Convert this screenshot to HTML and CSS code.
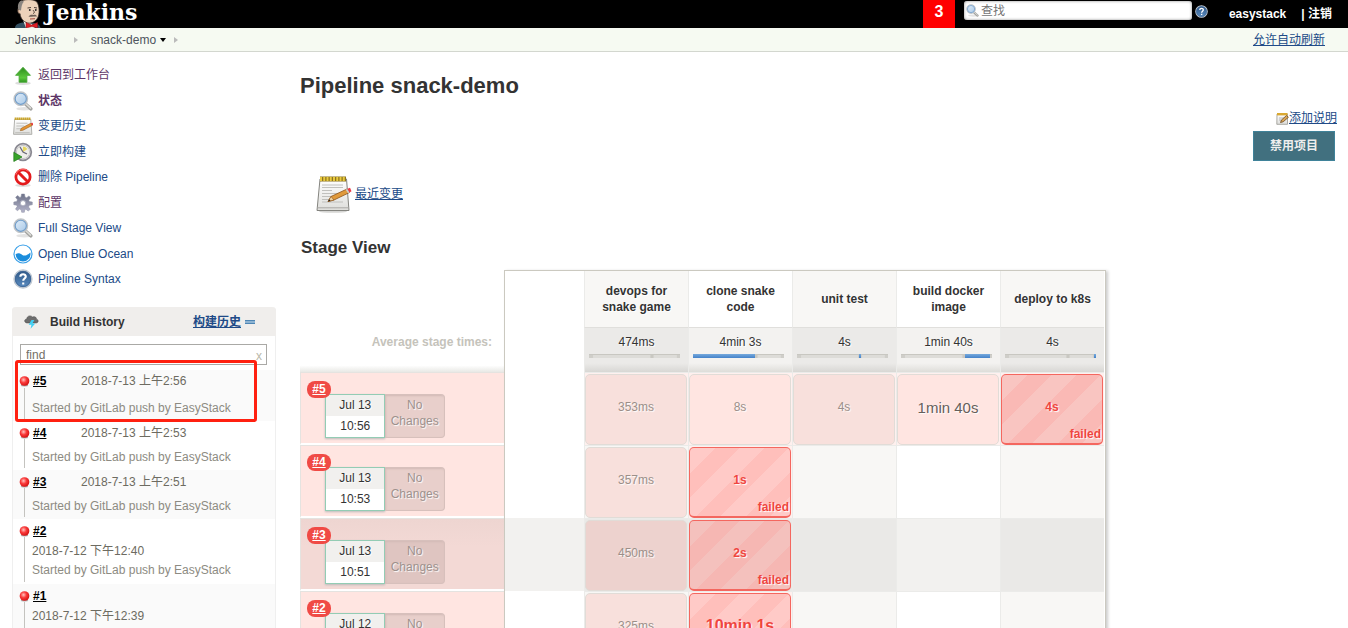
FILE: index.html
```html
<!DOCTYPE html>
<html lang="zh-CN">
<head>
<meta charset="utf-8">
<title>snack-demo [Jenkins]</title>
<link rel="stylesheet" href="styles.css">
</head>
<body>
<svg class="sprite" aria-hidden="true">
  <defs>
    <linearGradient id="g-green" x1="0" y1="0" x2="0" y2="1"><stop offset="0" stop-color="#2c8a1c"/><stop offset=".7" stop-color="#5cc83c"/><stop offset="1" stop-color="#2f951f"/></linearGradient>
    <linearGradient id="g-glass" x1="0" y1="0" x2="1" y2="1"><stop offset="0" stop-color="#e4effa"/><stop offset="1" stop-color="#a4c6e6"/></linearGradient>
    <linearGradient id="g-help" x1="0" y1="0" x2="0" y2="1"><stop offset="0" stop-color="#2e5583"/><stop offset="1" stop-color="#5c8fc4"/></linearGradient>
    <linearGradient id="g-gear" x1="0" y1="0" x2="0" y2="1"><stop offset="0" stop-color="#6c7187"/><stop offset="1" stop-color="#b4b4cb"/></linearGradient>
    <linearGradient id="g-paper" x1="0" y1="0" x2="0" y2="1"><stop offset="0" stop-color="#fff"/><stop offset="1" stop-color="#dededb"/></linearGradient>
    <radialGradient id="g-ball" cx=".4" cy=".38" r=".6"><stop offset="0" stop-color="#ffc4c0"/><stop offset=".5" stop-color="#fa3b3b"/><stop offset="1" stop-color="#d81516"/></radialGradient>
  </defs>
  <symbol id="i-up" viewBox="1 1 18 18"><ellipse cx="10" cy="17.400" rx="7" ry="1.500" fill="#ddd"/><path d="M10 3 16.700 10.300H13.500V16.500H6.500V10.300H3.300Z" fill="url(#g-green)" stroke="#4aa93a" stroke-width=".8"/></symbol>
  <symbol id="i-search" viewBox="1 1 18 18"><ellipse cx="11" cy="17" rx="7" ry="1.500" fill="#e3e3e3"/><path d="M12 12.500 17 17" stroke="#a3a3a0" stroke-width="3.200" stroke-linecap="round"/><path d="M12.500 12.500 16.800 16.400" stroke="#dcdcd8" stroke-width="1.300" stroke-linecap="round"/><circle cx="8" cy="8" r="5.900" fill="url(#g-glass)" stroke="#c0c4c8" stroke-width="1.600"/><circle cx="8" cy="8" r="5" fill="none" stroke="#6f9dcb" stroke-width="1"/></symbol>
  <symbol id="i-note" viewBox="1 1 18 18"><path d="M2.500 4H17L18 17.500H1.500Z" fill="url(#g-paper)" stroke="#a8a8a4" stroke-width=".8"/><path d="M2.500 3.500H17" stroke="#c9a52d" stroke-width="2.400" stroke-dasharray="1.500 .3"/><path d="M4 7.500H14M4 10H11M4 12.500H9M3 16H16" stroke="#b9b9b6" stroke-width=".8"/><path d="M7.500 14.200 8.500 12 17 7.500 18.200 9.500 10 13.800Z" fill="#e69430" stroke="#93591c" stroke-width=".5"/><path d="M17 7.500 18.600 7 19.300 8.800 18.200 9.500Z" fill="#e8383b"/></symbol>
  <symbol id="i-edit" viewBox="0 0 13 13"><path d="M1 2H11.500V12.300H.8Z" fill="url(#g-paper)" stroke="#98978f" stroke-width=".8"/><path d="M1 2.200H11.500" stroke="#d9a832" stroke-width="2.400"/><path d="M3 6H8M3 8H6" stroke="#aaa" stroke-width=".8"/><path d="M4.500 10.500 5.500 8 10.500 3.500 12.400 5.300 7.200 9.800Z" fill="#d9a556" stroke="#6b4a22" stroke-width=".8"/></symbol>
  <symbol id="i-notepad" viewBox="0 0 36 38"><ellipse cx="17" cy="36.500" rx="14" ry="1.300" fill="#d6d6d4"/><path d="M4 4H30.500L33 35.500H1Z" fill="url(#g-paper)" stroke="#84847f"/><path d="M1.500 32.800H32.500" stroke="#aaa9a5"/><path d="M4 4H30" stroke="#8d7420" stroke-width="5"/><path d="M4 4H30" stroke="#e9c93d" stroke-width="4.200" stroke-dasharray="2 1.250"/><path d="M6 10H27M6 12.500H27M6 15.500H16M6 18.500H26M6 21.500H22M6 24.500H14M6 27H27" stroke="#bbbbb8" stroke-width=".9"/><path d="M12 26.500 15 21.500 31 14 33.500 17.500 18 25Z" fill="#e09a3c" stroke="#8b531a" stroke-width=".8"/><path d="M12 26.500 15 21.500 18 25Z" fill="#efcf9b" stroke="#8b531a" stroke-width=".6"/><path d="M12 26.500 13.300 24.300 14.500 25.800Z" fill="#222"/><path d="M31 14 34 12.700 35.500 16.200 33.500 17.500Z" fill="#eb3944"/><path d="M29.600 14.600 31.300 13.900 33.500 17.500 32 18.200Z" fill="#c9cdcc"/></symbol>
  <symbol id="i-clock" viewBox="0 0 20 20"><circle cx="10" cy="10" r="8.300" fill="#eeeee9" stroke="#8a8992" stroke-width="1.800"/><circle cx="10" cy="10" r="6.600" fill="none" stroke="#c2c1c5" stroke-width=".9"/><path d="M10 10V4.500A5.500 5.500 0 0 1 14.500 7Z" fill="#e6d65e"/><path d="M7 5 10 10 14 12" fill="none" stroke="#6a6978" stroke-width="1.300"/><path d="M.8 10.300 9 15 .8 19.500Z" fill="#38a329" stroke="#207a18" stroke-width=".7"/></symbol>
  <symbol id="i-no" viewBox="1 1 18 18"><ellipse cx="10" cy="17.500" rx="7" ry="1.500" fill="#ddd"/><circle cx="10" cy="10" r="6.400" fill="#fff" stroke="#e41a1c" stroke-width="2.500"/><path d="M5.500 5.500 14.500 14.500" stroke="#e41a1c" stroke-width="2.700"/><path d="M3.500 8A6.800 6.800 0 0 1 15 5" fill="none" stroke="#f77" stroke-width=".8"/></symbol>
  <symbol id="i-gear" viewBox="0 0 20 20"><path fill="url(#g-gear)" stroke="#8b8ea3" stroke-width=".5" d="M8.500 1H11.500L12 4 13.600 4.700 16 2.900 17.500 5 15.800 7.200 16.300 8.500 19.300 9V11.700L16.300 12.300 15.500 14 17.300 16.300 15.200 18 12.900 16.200 11.800 16.700 11.300 19.300H8.700L8.200 16.700 6.500 16 4.300 17.800 2.500 16 4.200 13.500 3.700 12.200.8 11.700V9L3.700 8.400 4.400 6.800 2.600 4.300 4.600 2.600 6.900 4.400 8 4Z"/><circle cx="10" cy="10.200" r="2.700" fill="#fff" stroke="#a9abbd"/></symbol>
  <symbol id="i-ocean" viewBox="0 0 20 20"><circle cx="10" cy="10" r="9" fill="#fff" stroke="#3aa0e8" stroke-width="1.200"/><path d="M2.600 10.300C5 8.600 7 9.300 9 10.700S13.500 12.100 17.300 8.500A7.500 7.500 0 0 1 10 17.500 7.400 7.400 0 0 1 2.600 10.300Z" fill="#1b8ddc"/></symbol>
  <symbol id="i-help" viewBox="1 1 18 18"><circle cx="10" cy="10" r="8" fill="url(#g-help)" stroke="#bfc8d2" stroke-width="1.400"/><circle cx="10" cy="10" r="6.900" fill="none" stroke="#3f6796" stroke-width=".8"/><path d="M7.600 8C7.600 4.900 12.600 5 12.500 7.900 12.400 9.600 10.200 9.600 10.200 11.600M10.200 13.200V15" fill="none" stroke="#fff" stroke-width="1.900"/></symbol>
  <symbol id="i-ball" viewBox="0 0 12 12"><ellipse cx="6" cy="11" rx="4" ry="1" fill="#aaa"/><circle cx="6" cy="6" r="5.300" fill="url(#g-ball)"/></symbol>
</svg>

<header class="topbar">
  <a class="logo" href="#">
    <svg class="butler" viewBox="0 0 28 28" aria-hidden="true">
      <path d="M0 28C0 25 3 23 8 22.500L20 23C24 24 25 26 25.500 28Z" fill="#335061"/>
      <path d="M8 20 17 24 20 28H11Z" fill="#f4f4ef"/>
      <path d="M5 2C8-1 18-1.500 22 2 24.500 6 24.500 12 23.500 16 22 21 17 24 12.500 23 8 21.500 5.500 18 5 14 2.500 13 2 9 3.500 8Z" fill="#ecd2ba" stroke="#2b2320" stroke-width=".8"/>
      <path d="M6 .5C2.500 3 2.500 7 3.500 10L6 10.500C6.500 7 6.500 4 9 1.500Z" fill="#8a8580"/>
      <path d="M3.500 9C2 11 3 14 5.500 14" fill="#dfb89b" stroke="#2b2320" stroke-width=".7"/>
      <path d="M12.500 8 16 7.500M19 7.500 22 8M18 10C19.500 12 20 13 18 13.500" fill="none" stroke="#3d302a" stroke-width=".9"/>
      <circle cx="14.800" cy="10" r=".9" fill="#222"/><circle cx="20.800" cy="10" r=".9" fill="#222"/>
      <path d="M13.500 16.500C15 14.300 17 14.500 18.500 15 20 14.500 21.500 15 22 16.500 19 16.500 16 17 13.500 16.500Z" fill="#6c5f57"/>
      <path d="M15 19 20 18.700" stroke="#a44b3e" stroke-width="1"/>
      <path d="M11 22.500 16.500 25 22.500 22.500V28L17 26.500 11 28Z" fill="#e01f26" stroke="#8d1015" stroke-width=".5"/>
    </svg>
    <span>Jenkins</span>
  </a>
  <a class="alerts" href="#">3</a>
  <form class="search">
    <svg class="search-icon" aria-hidden="true"><use href="#i-search"/></svg>
    <input type="text" placeholder="查找" aria-label="查找">
  </form>
  <a class="help" href="#" aria-label="帮助"><svg aria-hidden="true"><use href="#i-help"/></svg></a>
  <nav class="login"><a href="#">easystack</a><span class="logout">| <a href="#">注销</a></span></nav>
</header>

<nav class="crumbs">
  <a href="#">Jenkins</a><i class="sep"></i><a href="#">snack-demo</a><i class="caret"></i><i class="sep near"></i>
  <a class="refresh" href="#">允许自动刷新</a>
</nav>

<div class="page">
  <aside class="side">
    <ul class="tasks">
      <li><svg><use href="#i-up"/></svg><a class="visited" href="#">返回到工作台</a></li>
      <li><svg><use href="#i-search"/></svg><a class="visited current" href="#">状态</a></li>
      <li><svg><use href="#i-note"/></svg><a href="#">变更历史</a></li>
      <li><svg><use href="#i-clock"/></svg><a href="#">立即构建</a></li>
      <li><svg><use href="#i-no"/></svg><a href="#">删除 Pipeline</a></li>
      <li><svg><use href="#i-gear"/></svg><a class="visited" href="#">配置</a></li>
      <li><svg><use href="#i-search"/></svg><a href="#">Full Stage View</a></li>
      <li><svg><use href="#i-ocean"/></svg><a href="#">Open Blue Ocean</a></li>
      <li><svg><use href="#i-help"/></svg><a href="#">Pipeline Syntax</a></li>
    </ul>

    <section class="history">
      <div class="history-head">
        <svg class="storm" viewBox="0 0 16 16" aria-hidden="true"><path d="M3 9.500C0 9 0 5.500 3 5.300 3 2 7 1 9 3.200 12 2 13.500 4 13.200 5.500 16 6 15.500 9.500 13 9.500Z" fill="#6d6d6d" stroke="#4c4c4c" stroke-width=".6"/><path d="M8 6.500 5 11.500H8L7 15.800 12 10H9L11 6.500Z" fill="#3fd0f5"/></svg>
        <h2>Build History</h2>
        <a href="#">构建历史</a><i class="collapse"></i>
      </div>
      <div class="find"><input type="text" value="find" aria-label="find"><button type="button" aria-label="clear">x</button></div>
      <div class="builds">
        <div class="build first"><svg class="ball"><use href="#i-ball"/></svg><a href="#">#5</a><time>2018-7-13 上午2:56</time><p>Started by GitLab push by EasyStack</p></div>
        <div class="build"><svg class="ball"><use href="#i-ball"/></svg><a href="#">#4</a><time>2018-7-13 上午2:53</time><p>Started by GitLab push by EasyStack</p></div>
        <div class="build"><svg class="ball"><use href="#i-ball"/></svg><a href="#">#3</a><time>2018-7-13 上午2:51</time><p>Started by GitLab push by EasyStack</p></div>
        <div class="build stacked"><svg class="ball"><use href="#i-ball"/></svg><a href="#">#2</a><time>2018-7-12 下午12:40</time><p>Started by GitLab push by EasyStack</p></div>
        <div class="build stacked"><svg class="ball"><use href="#i-ball"/></svg><a href="#">#1</a><time>2018-7-12 下午12:39</time></div>
        <div class="marker"></div>
      </div>
    </section>
  </aside>

  <main class="main">
    <h1>Pipeline snack-demo</h1>
    <div class="actions">
      <a href="#"><svg aria-hidden="true"><use href="#i-edit"/></svg><span>添加说明</span></a>
      <button type="button">禁用项目</button>
    </div>
    <div class="recent"><svg aria-hidden="true"><use href="#i-notepad"/></svg><a href="#">最近变更</a></div>
    <h2>Stage View</h2>

    <div class="stage-view">
      <table>
        <colgroup><col class="c-job"><col class="c-gap"><col span="5" class="c-stage"></colgroup>
        <thead>
          <tr class="names"><td></td><td></td><th>devops for snake game</th><th>clone snake code</th><th>unit test</th><th>build docker image</th><th>deploy to k8s</th></tr>
          <tr class="averages"><th>Average stage times:</th><td></td>
            <td>474ms<div class="bar"></div></td>
            <td>4min 3s<div class="bar"><i style="left:0;width:68%"></i></div></td>
            <td>4s<div class="bar"><i style="left:68%;width:2%"></i></div></td>
            <td>1min 40s<div class="bar"><i style="left:70%;width:28%"></i></div></td>
            <td>4s<div class="bar"><i style="left:98%;width:2%"></i></div></td></tr>
        </thead>
        <tbody>
          <tr class="partial">
            <td class="job"><a class="num" href="#">#5</a><div class="info"><div class="when"><span>Jul 13</span><span>10:56</span></div><div class="changes">No Changes</div></div></td><td></td>
            <td><div class="stage">353ms</div></td><td><div class="stage">8s</div></td><td><div class="stage">4s</div></td><td><div class="stage long">1min 40s</div></td><td><div class="stage failed">4s<b>failed</b></div></td></tr>
          <tr>
            <td class="job"><a class="num" href="#">#4</a><div class="info"><div class="when"><span>Jul 13</span><span>10:53</span></div><div class="changes">No Changes</div></div></td><td></td>
            <td class="ran"><div class="stage">357ms</div></td><td class="ran"><div class="stage failed">1s<b>failed</b></div></td><td></td><td></td><td></td></tr>
          <tr class="hovered">
            <td class="job"><a class="num" href="#">#3</a><div class="info"><div class="when"><span>Jul 13</span><span>10:51</span></div><div class="changes">No Changes</div></div></td><td></td>
            <td class="ran"><div class="stage">450ms</div></td><td class="ran"><div class="stage failed">2s<b>failed</b></div></td><td></td><td></td><td></td></tr>
          <tr>
            <td class="job"><a class="num" href="#">#2</a><div class="info"><div class="when"><span>Jul 12</span><span>20:40</span></div><div class="changes">No Changes</div></div></td><td></td>
            <td class="ran"><div class="stage">325ms</div></td><td class="ran"><div class="stage failed longest">10min 1s<b>failed</b></div></td><td></td><td></td><td></td></tr>
        </tbody>
      </table>
    </div>
  </main>
</div>
</body>
</html>
```

FILE: styles.css
```css
* { box-sizing: border-box; }
html { scrollbar-width: none; }
body {
  margin: 0;
  background: #fff;
  color: #333;
  font: 12px/16px "Liberation Sans", Arial, "Noto Sans CJK SC", sans-serif;
}
a { color: #204a87; }
h1, h2, p, ul { margin: 0; padding: 0; }
ul { list-style: none; }
.sprite { position: absolute; width: 0; height: 0; }
button, input { font: inherit; }

/* Top bar */
.topbar { display: flex; height: 28px; background: #000; padding-right: 16px; overflow: hidden; }
.logo { display: flex; gap: 2px; margin: 0 auto 0 15px; color: #fff; text-decoration: none; font: bold 22px/24px "DejaVu Serif", Georgia, serif; }
.butler { width: 28px; height: 28px; }
.alerts { width: 32px; margin-right: 9px; background: #f00; color: #fff; font-size: 16px; font-weight: bold; line-height: 24px; text-align: center; text-decoration: none; }
.search { display: flex; align-items: center; width: 228px; height: 19px; margin: 1px 3px 0 0; padding-left: 2px; background: #fff; border-radius: 3px; box-shadow: inset 0 0 3px #888; }
.search-icon { flex: none; width: 13px; height: 13px; }
.search input { flex: 1; min-width: 0; padding: 0 2px; border: 0; background: none; outline: 0; }
.search input::placeholder { color: #757575; }
.help svg { display: block; width: 13px; height: 13px; margin: 5px 21px 0 0; }
.login { color: #fff; font-weight: bold; line-height: 28px; }
.login a { color: #fff; text-decoration: none; }
.logout { margin-left: 15px; }

/* Breadcrumbs */
.crumbs { display: flex; align-items: center; height: 24px; padding: 0 23px 0 15px; background: #f6faf2; border-bottom: 1px solid #d3d7cf; }
.crumbs a { color: #4d545d; text-decoration: none; }
.sep { margin: 0 13px 0 18px; border: 3px solid transparent; border-left: 4px solid #bbb; border-right: 0; }
.sep.near { margin: 0 0 0 8px; }
.caret { margin-left: 4px; border: 3px solid transparent; border-top: 4px solid #000; border-bottom: 0; }
.crumbs .refresh { margin-left: auto; color: #204a87; text-decoration: underline; }

.page { display: flex; align-items: flex-start; }

/* Side panel */
.side { flex: none; width: 276px; padding: 10px 0 0 12px; }
.tasks li { display: flex; align-items: center; height: 26px; padding-left: 1px; }
.tasks li:nth-child(even) { height: 25px; }
.tasks svg { width: 20px; height: 20px; margin-right: 5px; }
.tasks a { color: #204a87; text-decoration: none; }
.tasks a.visited { color: #5c3566; }
.tasks a.current { font-weight: bold; }

.history { margin-top: 15px; border: 1px solid #efefef; border-top: 0; border-radius: 4px 4px 0 0; }
.history-head { display: flex; align-items: center; height: 29px; margin: 0 -1px; padding: 0 21px 0 12px; background: #f0eeec; border-radius: 4px 4px 0 0; }
.storm { width: 15px; height: 15px; margin-right: 11px; }
.history-head h2 { margin-right: auto; font-size: 12px; }
.history-head a { font-weight: bold; }
.collapse { width: 10px; height: 4px; margin-left: 4px; background: #8db3d2; border: 1px solid #4e86b4; border-width: 1px 0; }
.find { display: flex; height: 21px; margin: 8px 8px 5px 7px; border: 1px solid #aaa9a6; background: #fff; }
.find input { flex: 1; min-width: 0; padding: 0 5px; border: 0; outline: 0; color: #736f66; background: none; }
.find button { padding: 2px 4px 0; border: 0; background: none; color: #b9b8aa; line-height: 16px; }

.builds { position: relative; color: #6d6b61; }
.build { position: relative; display: grid; grid-template-columns: 12px 50px 1fr; align-items: center; padding: 4px 0 5px 6px; row-gap: 9px; }
.build:nth-child(odd) { background: #fafafa; }
.build::before { content: ""; position: absolute; left: 11px; top: 18px; bottom: 2px; width: 1px; background: #c4c3bf; }
.build > a { padding-left: 2px; color: #000; font-weight: bold; }
.build .ball { width: 11px; height: 12px; }
.build p { grid-column: 1 / -1; padding-left: 13px; color: #8d8b82; line-height: 15px; }
.build.first { row-gap: 12px; padding-top: 3px; }
.build.stacked { row-gap: 4px; padding-bottom: 6px; }
.build.stacked time { grid-column: 1 / -1; padding-left: 13px; }
.marker { position: absolute; left: 2px; top: -10px; width: 242px; height: 62px; border: 3px solid #ff2010; border-radius: 3px; }

/* Main panel */
.main { flex: 1; min-width: 0; padding: 20px 11px 20px 24px; }
.main h1 { font-size: 22px; line-height: 28px; }
.actions { display: flex; flex-direction: column; align-items: flex-end; gap: 5px; margin-top: 10px; }
.actions a { display: flex; align-items: center; text-decoration: none; }
.actions a span { text-decoration: underline; }
.actions svg { width: 13px; height: 13px; }
.actions button { height: 30px; margin-right: 2px; padding: 0 16px; border: 1px solid #3f8299; background: #41707f; color: #eee; font-weight: bold; }
.recent { display: flex; align-items: center; gap: 3px; margin: 14px 0 0 16px; }
.recent svg { width: 36px; height: 38px; }
.main h2 { margin: 23px 0 11px 1px; font-size: 17px; line-height: 24px; }

/* Stage view */
.stage-view { position: relative; width: max-content; }
.stage-view::after { content: ""; position: absolute; left: 204px; top: -1px; right: -2px; bottom: 0; border: 1px solid #cbc9c0; box-shadow: 2px 1px 3px #ccc; pointer-events: none; }
table { width: 804px; table-layout: fixed; border-collapse: separate; border-spacing: 0; text-align: center; text-shadow: 1px 1px 1px #fff; }
.c-job { width: 204px; }
.c-gap { width: 80px; }
.c-stage { width: 104px; }
td, th { padding: 0; }
td:nth-child(n+3), th:nth-child(n+3) { border-left: 1px solid #ebebe9; }
td:nth-child(odd), th:nth-child(odd) { background-color: #f8f7f5; }
tr > :first-child { background-color: transparent; }
.names th { height: 57px; padding: 0 8px; border-bottom: 1px solid #e0dfdc; }
.averages { height: 44px; }
.averages > * { vertical-align: top; padding: 6px 4px 0; }
.averages th { padding-right: 12px; text-align: right; color: #c5c3bb; background: linear-gradient(#fff 85%, #e8e8e5); }
.averages td:nth-child(n+3) { background: linear-gradient(#f3f2f0 80%, #deddd9); }
.averages td:nth-child(2n+3) { background: linear-gradient(#ebeae8 80%, #d8d7d4); }
.bar { position: relative; height: 4px; margin: 4px 4px 0 0; background: linear-gradient(90deg, #cfcec9 4%, #dddcd8 5%, #dddcd8 67%, #c9c8c2 68%, #c9c8c2 70%, #dddcd8 72%, #dddcd8 96%, #cfcec9 97%); border-top: 1px solid #c8c7c1; }
.bar i { position: absolute; top: -1px; height: 4px; background: linear-gradient(#76a9dc, #4482ca); }

tbody td { height: 73px; vertical-align: top; }
tbody td:nth-child(n+3) { border-top: 1px solid #ebebe9; }
tbody tr > td.job { position: relative; background: #ffe5e1; border: 1px solid #e5e3e0; border-bottom: 2px solid #fff; border-right: 0; background-clip: padding-box; }
.num { position: absolute; z-index: 1; left: 6px; top: 8px; width: 24px; height: 17px; border-radius: 8px; background: #f04a45; color: #fff; font-weight: bold; text-shadow: none; }
.info { display: flex; width: 120px; margin: 21px 0 0 24px; height: 44px; }
.when { width: 61px; border: 1px solid #93ccb4; background: #fff; box-shadow: 0 1px 2px #bbb; }
.when span { display: block; line-height: 20px; }
.when span:first-child { line-height: 21px; background: #f1f0ee; }
.changes { width: 60px; padding: 2px 3px; border: 1px solid #d7c0bc; border-left: 0; border-radius: 0 4px 4px 0; background: #e8cfcb; color: #9d918d; box-shadow: inset 1px 1px 2px #d2bab6; }
.partial td:nth-child(n+3), .ran { background: #fff0ee; }
.stage { position: relative; height: 71px; margin: 1px 1px 0 0; border: 1px solid #e1dcd7; border-radius: 5px; background: #ffe5e1; color: #9b8f89; line-height: 64px; }
td:nth-child(odd) .stage:not(.failed) { background: #f8e0dc; }
.stage.long { font-size: 15px; color: #665f5b; line-height: 66px; }
.stage.failed { border-color: #f4675f; border-bottom-width: 2px; background: repeating-linear-gradient(135deg, #ffcac7 0 18px, #ffbfbb 18px 35px); color: #ef463f; font-weight: bold; }
td:nth-child(odd) .stage.failed { background: repeating-linear-gradient(135deg, #f9c5c1 0 18px, #fab9b5 18px 35px); }
.stage.failed.longest { font-size: 16px; }
.stage b { position: absolute; right: 1px; bottom: 1px; font-size: 12px; line-height: 16px; }

.hovered td { background-color: #f2f1ef; }
.hovered td:nth-child(n+3) { background-color: #eae9e7; }
.hovered td:nth-child(even):not(.ran) { background-color: #f2f1ef; }
.hovered td.job { background: linear-gradient(#eed5d1, #f3d9d5 40%); background-clip: padding-box; }
.hovered .changes { background: #dfc5c1; }
.hovered td.ran .stage { background: #edd2ce; }
.hovered td.ran .stage.failed { background: repeating-linear-gradient(135deg, #f4c1bd 0 18px, #f6b7b3 18px 35px); }
```
